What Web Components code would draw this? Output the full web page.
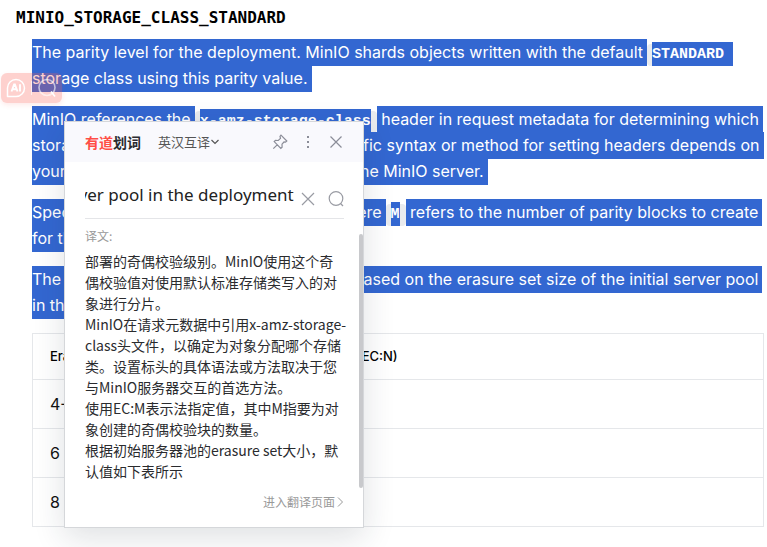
<!DOCTYPE html>
<html lang="en">
<head>
<meta charset="utf-8">
<title>MINIO_STORAGE_CLASS_STANDARD</title>
<style>
body{margin:0;background:#fff;color:#111;font-family:Inter,"Liberation Sans",sans-serif;font-size:16px;line-height:26px}
</style>
</head>
<body>
<doc-page></doc-page>
<script>
const define=(name,html,init)=>customElements.define(name,class extends HTMLElement{
  constructor(){super();this.attachShadow({mode:"open"}).innerHTML=html;}
  connectedCallback(){if(init)init(this.shadowRoot);}
});

define("code-chip",`<style>
:host{display:inline;padding:2px 6px 3px 5px;border-radius:4px;background:#e9ebee;font:bold 15px/20px "Liberation Mono",monospace;white-space:nowrap}
code{font:inherit;color:#fff;background:#3367d1;padding:4px 0 3px}
:host([trailing]) code{padding-right:9px;margin-right:-9px}
</style><code><slot></slot></code>`);

define("selected-text",`<style>
:host{display:block;color:#fff;margin-bottom:15px}
p{margin:0}
::slotted(span){background:#3367d1;padding:3px 4px 4px 0;-webkit-box-decoration-break:clone;box-decoration-break:clone}
</style><p><slot></slot></p>`);

define("parity-table",`<style>
:host{display:block}
table{width:100%;border:1px solid #e5e7ea;border-collapse:collapse;text-align:left}
th,td{border-bottom:1px solid #e5e7ea;padding:11px 17px;line-height:26px;font-weight:400}
th{font-size:13px;line-height:23px;font-weight:500;color:#000}
th:first-child{width:30%;box-sizing:border-box}
</style>
<table><thead><tr><th scope="col">Erasure Set Size</th><th scope="col">Default Parity (EC:N)</th></tr></thead>
<tbody><tr><td>4-5</td><td>EC:2</td></tr><tr><td>6 - 7</td><td>EC:3</td></tr><tr><td>8 - 16</td><td>EC:4</td></tr></tbody></table>`);

define("ai-badge",`<style>
:host{display:flex;box-sizing:border-box;width:61px;height:30px;border-radius:6px;background:#fb5a5047;box-shadow:0 2px 5px #fb5a5020;align-items:center}
button{all:unset;display:flex;flex:1;justify-content:center}
i{width:1px;height:14px;background:#ffffffa0}
</style>
<button aria-label="AI"><svg width="20" height="20" viewBox="0 0 20 20" fill="none" stroke="#fff" stroke-width="1.5"><path d="M1.500 18.500V10a8.500 8.500 0 1 1 8.500 8.500Z" stroke-linejoin="round"/><path d="m5.500 13.500 2.600-7h.8l2.600 7M6.500 11.300h4M14 6.300v7.200" stroke-width="1.900"/></svg></button><i></i>
<button aria-label="Search"><svg width="20" height="20" viewBox="0 0 20 20" fill="none" stroke="#fff" stroke-opacity=".6" stroke-width="1.600"><circle cx="10" cy="9.500" r="8"/><path d="m14 13.500 4 5" stroke-opacity="1"/></svg></button>`);

define("translate-header",`<style>
:host{display:flex;align-items:center;height:40px;padding:0 19px 0 20px;background:#f9f9fd;box-sizing:border-box;font-size:13px;color:#555}
strong{font-size:14px;font-weight:700;color:#2b2b30;margin-right:17px;white-space:nowrap}
strong em{font-style:normal;color:#ff4e46}
button{all:unset;display:flex;align-items:center}
nav{margin-left:auto;display:flex;gap:12px;align-items:center}
svg{display:block;fill:none;stroke:#8b8d98}
</style>
<strong><em>有道</em>划词</strong>
<button>英汉互译<svg width="10" height="10" viewBox="0 0 10 10" style="stroke:#555;stroke-width:1.200"><path d="m1.500 3 3.500 3.500L8.500 3"/></svg></button>
<nav>
<button aria-label="Pin"><svg width="16" height="16" viewBox="0 0 16 16"><path d="M9 1.200 14.800 7l-1.300 1.200-1.500-.2-2 2.200.1 3-1.300 1.300L2.200 7.600 3.500 6.300l2.800.2L8.500 4.300 8 2.300ZM5.200 10.800 1.300 14.700" stroke-width="1.200"/></svg></button>
<button aria-label="More"><svg width="16" height="16" viewBox="0 0 16 16" style="fill:#8b8d98;stroke:none"><path d="M7 2h2v2H7zM7 7h2v2H7zM7 12h2v2H7z"/></svg></button>
<button aria-label="Close"><svg width="16" height="16" viewBox="0 0 16 16"><path d="m2.500 2.500 11 11m0-11-11 11" stroke-width="1.200"/></svg></button>
</nav>`);

define("translate-search",`<style>
:host{display:flex;align-items:center;margin:0 19px 0 20px;height:57px;border-bottom:1px solid #e4e5e8;box-sizing:border-box}
input{flex:1;min-width:0;border:0;padding:0;margin:10px 6px 0 0;outline:0;background:none;color:#222;font:17px/26px "Noto Sans","Open Sans",sans-serif;height:26px}
button{all:unset;margin:18px 0 0 12px}
button:first-of-type{margin-left:0}
svg{display:block;fill:none;stroke:#999ba3;stroke-width:1.200}
</style>
<input aria-label="Source text" value="size of the initial server pool in the deployment">
<button aria-label="Clear"><svg width="16" height="16" viewBox="0 0 16 16"><path d="m2 2 12 12m0-12L2 14"/></svg></button>
<button aria-label="Search"><svg width="16" height="16" viewBox="0 0 16 16"><circle cx="8" cy="7.500" r="6.800"/><path d="m12.500 12.500 2.500 2.500"/></svg></button>`,
r=>{const i=r.querySelector("input");i.scrollLeft=i.scrollWidth;});

define("translate-popup",`<style>
:host{display:flex;flex-direction:column;box-sizing:border-box;width:300px;background:#fff;border:1px solid #d5d7da;box-shadow:0 10px 30px #1e283c24;font-family:"Noto Sans CJK SC",sans-serif;color:#2a2b2e}
.body{display:flex;margin-top:7px}
.text{flex:1;padding-left:20px;font-size:14px;line-height:21px;white-space:nowrap}
h2{margin:0 0 5px;font-size:12px;line-height:20px;font-weight:400;color:#999}
p{margin:0}
.bar{width:4px;border-radius:2px;background:#c8c9cc;margin:8px 0 -6px}
footer{display:flex;justify-content:flex-end;padding:10px 19px 15px;font-size:12px;line-height:20px}
a{color:#999;text-decoration:none;display:flex;align-items:center;gap:2px}
svg{fill:none;stroke:#999}
</style>
<translate-header></translate-header>
<translate-search></translate-search>
<div class="body"><div class="text"><h2>译文:</h2>
<p>部署的奇偶校验级别。MinIO使用这个奇<br>偶校验值对使用默认标准存储类写入的对<br>象进行分片。</p>
<p>MinIO在请求元数据中引用x-amz-storage-<br>class头文件，以确定为对象分配哪个存储<br>类。设置标头的具体语法或方法取决于您<br>与MinIO服务器交互的首选方法。</p>
<p>使用EC:M表示法指定值，其中M指要为对<br>象创建的奇偶校验块的数量。</p>
<p>根据初始服务器池的erasure set大小，默<br>认值如下表所示</p></div><div class="bar"></div></div>
<footer><a href="#">进入翻译页面<svg width="7" height="12" viewBox="0 0 7 12"><path d="m1 1.500 4.500 4.500L1 10.500"/></svg></a></footer>`);

define("doc-page",`<style>
:host{display:block;position:relative;box-sizing:border-box;min-height:100vh;padding:5px 3px 0 16px}
h1{margin:0 0 8px;font:bold 16px/26px "DejaVu Sans Mono",monospace;color:#000}
main{margin-left:16px}
ai-badge{position:absolute;left:1px;top:73px}
translate-popup{position:absolute;left:64px;top:121px}
</style>
<h1>MINIO_STORAGE_CLASS_STANDARD</h1>
<main>
<selected-text><span>The parity level for the deployment. MinIO shards objects written with the default</span><code-chip trailing>STANDARD</code-chip> <span>storage class using this parity value.</span></selected-text>
<selected-text><span>MinIO references the</span><code-chip>x-amz-storage-class</code-chip><span> header in request metadata for determining which storage class to assign an object. The specific syntax or method for setting headers depends on your preferred method for interfacing with the MinIO server.</span></selected-text>
<selected-text><span>Specify the value using</span><code-chip>EC:M</code-chip><span> notation, where</span><code-chip>M</code-chip><span> refers to the number of parity blocks to create for the object.</span></selected-text>
<selected-text><span>The following table lists the default values based on the erasure set size of the initial server pool in the deployment:</span></selected-text>
<parity-table></parity-table>
</main>
<ai-badge></ai-badge>
<translate-popup></translate-popup>`);
</script>
</body>
</html>
